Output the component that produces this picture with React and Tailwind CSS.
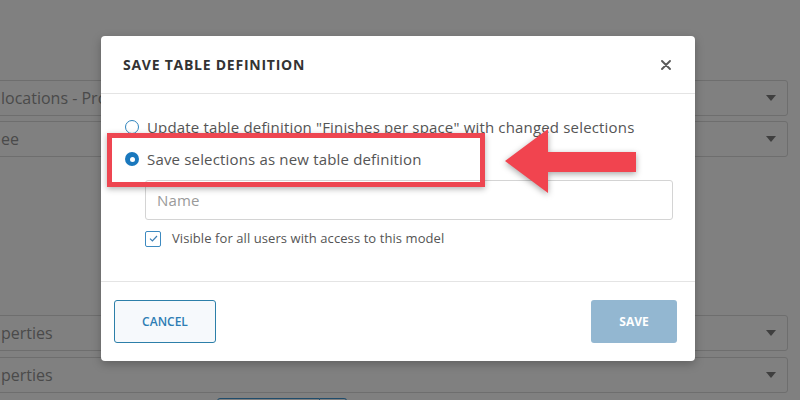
import React from "react";

function Caret() {
  return (
    <svg width="10" height="6" viewBox="0 0 10 6" className="shrink-0">
      <path d="M0 0 L10 0 L5 6 Z" fill="#3f3f3f" />
    </svg>
  );
}

function BgSelect({ text }) {
  return (
    <div className="h-[36px] border border-[#6e6e6e] rounded-[3px] flex items-center justify-between pl-[14px] pr-[11px] text-[16px] text-[#4a4a4a]">
      <span className="whitespace-nowrap">{text}</span>
      <Caret />
    </div>
  );
}

export default function App() {
  return (
    <div
      className="relative w-[800px] h-[400px] overflow-hidden bg-[#808080]"
      style={{ fontFamily: '"Open Sans", "Noto Sans", sans-serif' }}
    >
      {/* dimmed page behind the dialog */}
      <div className="pt-[80px] pr-[12px] ml-[-14px]">
        <div className="flex flex-col gap-[5px]">
          <BgSelect text="locations - Project" />
          <BgSelect text="ee" />
        </div>
        <div className="flex flex-col gap-[6px] mt-[158px]">
          <BgSelect text="perties" />
          <BgSelect text="perties" />
        </div>
        <div className="flex mt-[5px] ml-[231px]">
          <div className="w-[103px] h-[20px] border border-[#1f4c6b] rounded-l-[3px]" />
          <div className="w-[27px] h-[20px] border border-l-0 border-[#1f4c6b] rounded-r-[3px]" />
        </div>
      </div>

      {/* dialog */}
      <div className="absolute left-[101px] top-[36px] w-[594px] h-[325px] bg-white rounded-[4px] shadow-[0_3px_10px_rgba(0,0,0,0.25)] flex flex-col">
        <div className="h-[58px] flex items-center justify-between pl-[22px] pr-[24px] border-b border-[#e4e4e4]">
          <h2 className="text-[14px] font-bold tracking-[0.75px] text-[#333333]">
            SAVE TABLE DEFINITION
          </h2>
          <svg width="10" height="10" viewBox="0 0 10 10">
            <path d="M1 1 L9 9 M9 1 L1 9" stroke="#5a5a5a" strokeWidth="1.9" strokeLinecap="round" />
          </svg>
        </div>

        <div className="flex-1 pt-[17px] pl-[24px] pr-[22px] border-b border-[#e4e4e4]">
          <label className="h-[32px] flex items-center gap-[8px] text-[15px] tracking-[0.17px] text-[#555555]">
            <span className="w-[14px] h-[14px] rounded-full border-[1.5px] border-[#2f84bd] bg-white shrink-0" />
            <span className="whitespace-nowrap">
              Update table definition "Finishes per space" with changed selections
            </span>
          </label>
          <label className="h-[32px] flex items-center gap-[8px] text-[15px] tracking-[0.17px] text-[#555555]">
            <span className="w-[14px] h-[14px] rounded-full bg-[#1a78bd] shrink-0 flex items-center justify-center">
              <span className="w-[5px] h-[5px] rounded-full bg-white" />
            </span>
            <span className="whitespace-nowrap">Save selections as new table definition</span>
          </label>
          <div className="ml-[20px] mt-[5px] h-[40px] border border-[#d4d4d4] rounded-[3px] flex items-center px-[11px] text-[15px] tracking-[0.17px] text-[#9a9a9a]">
            Name
          </div>
          <label className="ml-[20px] mt-[9px] flex items-center gap-[11px] text-[13px] tracking-[0.08px] text-[#555555]">
            <span className="w-[16px] h-[16px] rounded-[2px] border-[1.5px] border-[#3d8ac0] flex items-center justify-center shrink-0">
              <svg width="9" height="7" viewBox="0 0 9 7">
                <path d="M1 3.6 L3.4 6 L8 1" fill="none" stroke="#3d7fb5" strokeWidth="1.2" />
              </svg>
            </span>
            <span>Visible for all users with access to this model</span>
          </label>
        </div>

        <div className="h-[79px] flex items-center justify-between pl-[13px] pr-[18px]">
          <button className="w-[102px] h-[43px] rounded-[3px] border border-[#2c7fa9] bg-[#f6f9fc] text-[12px] font-semibold text-[#2d7db4]">
            CANCEL
          </button>
          <button className="w-[86px] h-[43px] rounded-[3px] bg-[#93b7d1] text-[12px] font-bold text-white">
            SAVE
          </button>
        </div>
      </div>

      {/* annotation: red highlight box */}
      <div className="absolute left-[107px] top-[133px] w-[378px] h-[54px] border-[5px] border-[#ee4651] shadow-[0_2px_6px_rgba(0,0,0,0.3)]" />

      {/* annotation: red arrow */}
      <svg
        className="absolute left-[495px] top-[120px] drop-shadow-[0_2px_3px_rgba(0,0,0,0.35)]"
        width="150"
        height="85"
        viewBox="0 0 150 85"
      >
        <path d="M10 41 L53 9 L53 32 L141 32 L141 52 L53 52 L53 73 Z" fill="#f1444f" />
      </svg>
    </div>
  );
}
